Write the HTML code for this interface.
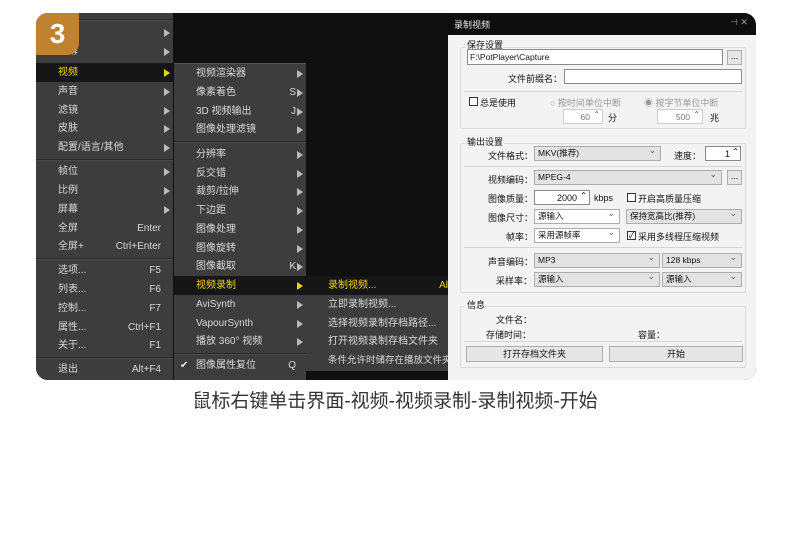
<!DOCTYPE html>
<html><head><meta charset="utf-8"><style>
*{margin:0;padding:0;box-sizing:border-box}
body{width:790px;height:539px;background:#fff;position:relative;overflow:hidden;font-family:"Liberation Sans","Noto Sans CJK SC",sans-serif}
.frame{position:absolute;left:36px;top:13px;width:720px;height:367px;border-radius:12px;overflow:hidden;background:#0f0f0f}
.a{position:absolute;white-space:nowrap}
.menu{position:absolute;background:#3d3d3d;overflow:hidden}
.it{position:absolute;left:0;right:0;height:19px;font-size:10px;color:#d8d8d8;line-height:19px;white-space:nowrap}
.it .t{position:absolute;left:22px;white-space:nowrap}
.it .k{position:absolute;right:12px}
.it .ar{position:absolute;right:3px;top:6px;width:0;height:0;border-left:6px solid #bbb;border-top:4px solid transparent;border-bottom:4px solid transparent}
.hl{background:#161616;color:#f2d200}
.hl .ar{border-left-color:#f2d200}
.sep{position:absolute;left:0;right:0;height:2px;background:#2a2a2a;border-bottom:1px solid #4a4a4a}
.dlg{position:absolute;left:412px;top:0;width:308px;height:367px;background:#f3f3f3}
.dt{font-size:9px;color:#111}
.box{position:absolute;background:#fff;border:1px solid #8a8a8a}
.cb{position:absolute;background:#e3e3e3;border:1px solid #adadad;font-size:8.5px;color:#111;padding-left:3px;line-height:13px}
.cb.w{background:#fff}
.cb:after{content:"⌄";position:absolute;right:4px;top:-3px;font-size:9px;color:#555}
.btn{position:absolute;background:#e6e6e6;border:1px solid #adadad;font-size:9px;text-align:center;line-height:14px;color:#111}
.gl{position:absolute;height:1px;background:#d5d5d5}
.chk{position:absolute;width:9px;height:9px;border:1px solid #333;background:#fff}
.grp{position:absolute;border:1px solid #dcdcdc;border-radius:2px}
</style></head><body>
<div class="frame">
 <div class="menu" style="left:0;top:0;width:137px;height:367px">
  <div class="sep" style="top:6px"></div>
  <div class="it" style="top:10px"><span class="ar"></span></div>
  <div class="it" style="top:29px"><span class="t">字幕</span><span class="ar"></span></div>
  <div class="it hl" style="top:50px"><span class="t">视频</span><span class="ar"></span></div>
  <div class="it" style="top:69px"><span class="t">声音</span><span class="ar"></span></div>
  <div class="it" style="top:88px"><span class="t">滤镜</span><span class="ar"></span></div>
  <div class="it" style="top:106px"><span class="t">皮肤</span><span class="ar"></span></div>
  <div class="it" style="top:125px"><span class="t">配置/语言/其他</span><span class="ar"></span></div>
  <div class="sep" style="top:146px"></div>
  <div class="it" style="top:149px"><span class="t">帧位</span><span class="ar"></span></div>
  <div class="it" style="top:168px"><span class="t">比例</span><span class="ar"></span></div>
  <div class="it" style="top:187px"><span class="t">屏幕</span><span class="ar"></span></div>
  <div class="it" style="top:206px"><span class="t">全屏</span><span class="k">Enter</span></div>
  <div class="it" style="top:224px"><span class="t">全屏+</span><span class="k">Ctrl+Enter</span></div>
  <div class="sep" style="top:245px"></div>
  <div class="it" style="top:248px"><span class="t">选项...</span><span class="k">F5</span></div>
  <div class="it" style="top:267px"><span class="t">列表...</span><span class="k">F6</span></div>
  <div class="it" style="top:286px"><span class="t">控制...</span><span class="k">F7</span></div>
  <div class="it" style="top:305px"><span class="t">属性...</span><span class="k">Ctrl+F1</span></div>
  <div class="it" style="top:323px"><span class="t">关于...</span><span class="k">F1</span></div>
  <div class="sep" style="top:344px"></div>
  <div class="it" style="top:347px"><span class="t">退出</span><span class="k">Alt+F4</span></div>
 </div>
 <div class="menu" style="left:138px;top:50px;width:132px;height:317px;border-top:1px solid #555">
  <div class="it" style="top:0"><span class="t">视频渲染器</span><span class="ar"></span></div>
  <div class="it" style="top:19px"><span class="t">像素着色</span><span class="k" style="right:10px">S</span><span class="ar"></span></div>
  <div class="it" style="top:38px"><span class="t">3D 视频输出</span><span class="k" style="right:10px">J</span><span class="ar"></span></div>
  <div class="it" style="top:56px"><span class="t">图像处理滤镜</span><span class="ar"></span></div>
  <div class="sep" style="top:77px"></div>
  <div class="it" style="top:81px"><span class="t">分辨率</span><span class="ar"></span></div>
  <div class="it" style="top:100px"><span class="t">反交错</span><span class="ar"></span></div>
  <div class="it" style="top:118px"><span class="t">裁剪/拉伸</span><span class="ar"></span></div>
  <div class="it" style="top:137px"><span class="t">下边距</span><span class="ar"></span></div>
  <div class="it" style="top:156px"><span class="t">图像处理</span><span class="ar"></span></div>
  <div class="it" style="top:175px"><span class="t">图像旋转</span><span class="ar"></span></div>
  <div class="it" style="top:193px"><span class="t">图像截取</span><span class="k" style="right:10px">K</span><span class="ar"></span></div>
  <div class="it hl" style="top:212px"><span class="t">视频录制</span><span class="ar"></span></div>
  <div class="it" style="top:231px"><span class="t">AviSynth</span><span class="ar"></span></div>
  <div class="it" style="top:250px"><span class="t">VapourSynth</span><span class="ar"></span></div>
  <div class="it" style="top:268px"><span class="t">播放 360° 视频</span><span class="ar"></span></div>
  <div class="sep" style="top:289px"></div>
  <div class="it" style="top:292px"><span class="a" style="left:6px;color:#eee">✔</span><span class="t">图像属性复位</span><span class="k" style="right:10px">Q</span></div>
 </div>
 <div class="menu" style="left:270px;top:263px;width:142px;height:95px">
  <div class="it hl" style="top:0"><span class="t">录制视频...</span><span class="k" style="right:0">Al</span></div>
  <div class="it" style="top:19px"><span class="t">立即录制视频...</span></div>
  <div class="it" style="top:38px"><span class="t">选择视频录制存档路径...</span></div>
  <div class="it" style="top:56px"><span class="t">打开视频录制存档文件夹</span></div>
  <div class="it" style="top:75px"><span class="t" style="font-size:9.5px">条件允许时储存在播放文件夹</span></div>
 </div>
 <div class="a" style="left:0;top:0;width:43px;height:42px;background:#c0822e;border-bottom-right-radius:12px;color:#fff;font-size:28px;font-weight:bold;text-align:center;line-height:42px">3</div>
 <div class="dlg">
  <div class="a" style="left:0;top:0;width:308px;height:22px;background:#0e0e0e"></div>
  <div class="a" style="left:6px;top:5px;font-size:9px;color:#eee">录制视频</div>
  <div class="a" style="left:282px;top:4px;font-size:9px;color:#999">⊣ ✕</div>
  <div class="grp" style="left:12px;top:34px;width:286px;height:82px"></div>
  <div class="a dt" style="left:18px;top:25px;background:#f3f3f3;padding:0 1px">保存设置</div>
  <div class="box" style="left:19px;top:36px;width:256px;height:16px"><span class="a dt" style="left:2px;top:2px;font-size:8.5px">F:\PotPlayer\Capture</span></div>
  <div class="btn" style="left:279px;top:37px;width:15px;height:15px;line-height:10px">...</div>
  <div class="a dt" style="left:60px;top:59px">文件前缀名：</div>
  <div class="box" style="left:116px;top:56px;width:178px;height:15px"></div>
  <div class="gl" style="left:16px;top:78px;width:278px"></div>
  <div class="chk" style="left:21px;top:84px"></div>
  <div class="a dt" style="left:32px;top:83px">总是使用</div>
  <div class="a" style="left:102px;top:83px;font-size:9px;color:#999">○ 按时间单位中断</div>
  <div class="a" style="left:196px;top:83px;font-size:9px;color:#999">◉ 按字节单位中断</div>
  <div class="box" style="left:115px;top:96px;width:40px;height:15px;border-color:#ccc"><span class="a" style="right:12px;top:2px;font-size:8.5px;color:#777">60</span><span class="a" style="right:2px;top:0;font-size:8px;color:#555">⌃</span></div>
  <div class="a dt" style="left:160px;top:98px">分</div>
  <div class="box" style="left:209px;top:96px;width:46px;height:15px;border-color:#ccc"><span class="a" style="right:12px;top:2px;font-size:8.5px;color:#777">500</span><span class="a" style="right:2px;top:0;font-size:8px;color:#555">⌃</span></div>
  <div class="a dt" style="left:262px;top:98px">兆</div>

  <div class="grp" style="left:12px;top:130px;width:286px;height:150px"></div>
  <div class="a dt" style="left:18px;top:122px;background:#f3f3f3;padding:0 1px">输出设置</div>
  <div class="a dt" style="left:40px;top:136px">文件格式：</div>
  <div class="cb" style="left:86px;top:133px;width:127px;height:15px">MKV(推荐)</div>
  <div class="a dt" style="left:226px;top:136px">速度：</div>
  <div class="box" style="left:257px;top:133px;width:36px;height:15px"><span class="a dt" style="right:10px;top:2px">1</span><span class="a" style="right:1px;top:0;font-size:8px">⌃</span></div>
  <div class="gl" style="left:16px;top:153px;width:278px"></div>
  <div class="a dt" style="left:40px;top:160px">视频编码：</div>
  <div class="cb" style="left:86px;top:157px;width:188px;height:15px">MPEG-4</div>
  <div class="btn" style="left:279px;top:157px;width:15px;height:15px;line-height:10px">...</div>
  <div class="a dt" style="left:40px;top:179px">图像质量：</div>
  <div class="box" style="left:86px;top:177px;width:56px;height:15px"><span class="a dt" style="right:12px;top:2px">2000</span><span class="a" style="right:2px;top:0;font-size:8px">⌃</span></div>
  <div class="a dt" style="left:146px;top:180px">kbps</div>
  <div class="chk" style="left:179px;top:180px"></div>
  <div class="a dt" style="left:190px;top:179px">开启高质量压缩</div>
  <div class="a dt" style="left:40px;top:198px">图像尺寸：</div>
  <div class="cb w" style="left:86px;top:196px;width:86px;height:15px">源输入</div>
  <div class="cb" style="left:178px;top:196px;width:116px;height:15px">保持宽高比(推荐)</div>
  <div class="a dt" style="left:58px;top:217px">帧率：</div>
  <div class="cb w" style="left:86px;top:215px;width:86px;height:15px">采用源帧率</div>
  <div class="chk" style="left:179px;top:218px;font-size:8px;line-height:7px;text-align:center">✓</div>
  <div class="a dt" style="left:190px;top:217px">采用多线程压缩视频</div>
  <div class="gl" style="left:16px;top:234px;width:278px"></div>
  <div class="a dt" style="left:40px;top:242px">声音编码：</div>
  <div class="cb" style="left:86px;top:240px;width:126px;height:15px">MP3</div>
  <div class="cb" style="left:214px;top:240px;width:80px;height:15px">128 kbps</div>
  <div class="a dt" style="left:48px;top:261px">采样率：</div>
  <div class="cb" style="left:86px;top:259px;width:126px;height:15px">源输入</div>
  <div class="cb" style="left:214px;top:259px;width:80px;height:15px">源输入</div>

  <div class="grp" style="left:12px;top:293px;width:286px;height:62px"></div>
  <div class="a dt" style="left:18px;top:285px;background:#f3f3f3;padding:0 1px">信息</div>
  <div class="a dt" style="left:48px;top:300px">文件名：</div>
  <div class="a dt" style="left:38px;top:315px">存储时间：</div>
  <div class="a dt" style="left:190px;top:315px">容量：</div>
  <div class="gl" style="left:16px;top:328px;width:278px"></div>
  <div class="btn" style="left:18px;top:333px;width:137px;height:16px">打开存档文件夹</div>
  <div class="btn" style="left:161px;top:333px;width:134px;height:16px">开始</div>
 </div>
</div>
<div class="a" style="left:0;width:790px;top:386px;text-align:center;font-size:19px;color:#333">鼠标右键单击界面-视频-视频录制-录制视频-开始</div>
</body></html>
